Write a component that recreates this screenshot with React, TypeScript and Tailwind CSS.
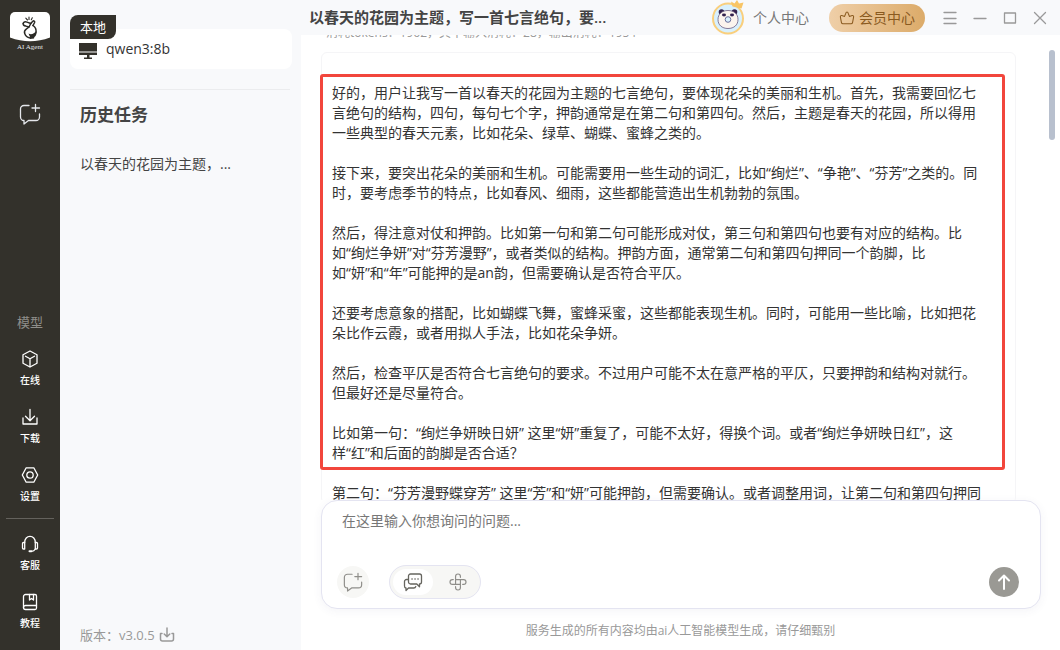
import { ReactNode } from "react";
import clsx from "clsx";

type IconProps = { className?: string };

const thoughts = [
  [
    "好的，用户让我写一首以春天的花园为主题的七言绝句，要体现花朵的美丽和生机。首先，我需要回忆七",
    "言绝句的结构，四句，每句七个字，押韵通常是在第二句和第四句。然后，主题是春天的花园，所以得用",
    "一些典型的春天元素，比如花朵、绿草、蝴蝶、蜜蜂之类的。",
  ],
  [
    "接下来，要突出花朵的美丽和生机。可能需要用一些生动的词汇，比如“绚烂”、“争艳”、“芬芳”之类的。同",
    "时，要考虑季节的特点，比如春风、细雨，这些都能营造出生机勃勃的氛围。",
  ],
  [
    "然后，得注意对仗和押韵。比如第一句和第二句可能形成对仗，第三句和第四句也要有对应的结构。比",
    "如“绚烂争妍”对“芬芳漫野”，或者类似的结构。押韵方面，通常第二句和第四句押同一个韵脚，比",
    "如“妍”和“年”可能押的是an韵，但需要确认是否符合平仄。",
  ],
  [
    "还要考虑意象的搭配，比如蝴蝶飞舞，蜜蜂采蜜，这些都能表现生机。同时，可能用一些比喻，比如把花",
    "朵比作云霞，或者用拟人手法，比如花朵争妍。",
  ],
  [
    "然后，检查平仄是否符合七言绝句的要求。不过用户可能不太在意严格的平仄，只要押韵和结构对就行。",
    "但最好还是尽量符合。",
  ],
  [
    "比如第一句：“绚烂争妍映日妍” 这里“妍”重复了，可能不太好，得换个词。或者“绚烂争妍映日红”，这",
    "样“红”和后面的韵脚是否合适？",
  ],
];

const nextThought = [
  "第二句：“芬芳漫野蝶穿芳” 这里“芳”和“妍”可能押韵，但需要确认。或者调整用词，让第二句和第四句押同",
];

const Svg = ({
  className,
  viewBox = "0 0 20 20",
  children,
}: IconProps & { viewBox?: string; children: ReactNode }) => (
  <svg
    className={className}
    viewBox={viewBox}
    fill="none"
    stroke="currentColor"
    strokeWidth="1.3"
    strokeLinecap="round"
    strokeLinejoin="round"
    aria-hidden="true"
  >
    {children}
  </svg>
);

const LogoIcon = () => (
  <svg className="h-[30px] w-10" viewBox="0 0 40 30" aria-hidden="true">
    <path d="M5 0h30a5 5 0 0 1 5 5v20.500Q20 33 0 25.500V5a5 5 0 0 1 5-5z" fill="#fff" />
    <g fill="none" stroke="#2b2a26" strokeWidth="1.5" strokeLinecap="round" strokeLinejoin="round">
      <path d="M15.800 6.200l1.700 1.800M19 5v2.500M22.300 5.800l-1 1.900" strokeWidth="1.1" />
      <path d="M13.200 11.500c.300-1.700 2-2 3.800-1.400l3.800 1.400 2-2.200c1-.900 2.300-.200 1.800 1.200l-1.600 3" />
      <path d="M13.200 11.500c-.200 1.700 1 2.300 2.600 2.600l3.200.900-2.500 1.800c-1.800 1.200-2.500 2.700-1.800 4.700.800 2.500 2.800 4 5.300 4.500" />
      <path d="M23 13.500c2.200 1.500 3.500 4 3 7-.200 1.500-.700 2.500-1.500 3.500M20.800 11.500L19 15" />
    </g>
    <path d="M18.500 21.500c2.500 1.500 5.500.500 8-2.500-.100 2.500-.700 4-2 5.500l-.500 2-4 .500v-2z" fill="#2b2a26" />
  </svg>
);

const NewChatIcon = ({ className }: IconProps) => (
  <Svg className={className} viewBox="0 0 22 22">
    <path d="M10 2.500H5A3.500 3.500 0 0 0 1.500 6v8A3.500 3.500 0 0 0 5 17.500v3.500l4.500-3.500H17a3.500 3.500 0 0 0 3.500-3.500v-3" />
    <path d="M16.500 1.500v7M13 5h7.500" />
  </Svg>
);

const CubeIcon = ({ className }: IconProps) => (
  <Svg className={className}>
    <path d="M10 2l7 3.700v8.600L10 18l-7-3.700V5.700z" />
    <path d="M5.500 7.200L10 9.800l4.500-2.600M10 9.800V17.500" />
  </Svg>
);

const DownloadIcon = ({ className }: IconProps) => (
  <Svg className={className}>
    <path d="M3 11v6h14v-6M10 2.500v11M5.500 9.200l4.500 4.500 4.500-4.500" />
  </Svg>
);

const SettingsIcon = ({ className }: IconProps) => (
  <Svg className={className}>
    <path d="M6.200 2.800h7.600L17.700 10l-3.900 7.200H6.200L2.300 10z" />
    <circle cx="10" cy="10" r="3.200" />
  </Svg>
);

const HeadsetIcon = ({ className }: IconProps) => (
  <Svg className={className}>
    <path d="M4.700 8.500C4.700 4.700 7 2.300 10 2.300s5.300 2.400 5.300 6.200" />
    <path d="M4.700 8.500v6.500H3.500c-.600 0-1-.500-1-1V9.500c0-.600.500-1 1-1zM15.300 8.500v6.500h1.200c.600 0 1-.500 1-1V9.500c0-.600-.500-1-1-1z" />
    <path d="M15.300 15c-.800 1.500-2 2.200-3.800 2.300" />
    <path d="M9.500 17.300h1.800" strokeWidth="2" />
  </Svg>
);

const BookIcon = ({ className }: IconProps) => (
  <Svg className={className}>
    <path d="M5.500 2.500h9.500c1 0 1.500.500 1.500 1.500v12c0 1-.500 1.500-1.500 1.500H5.500a2 2 0 0 1-2-2v-11a2 2 0 0 1 2-2z" />
    <path d="M3.500 15.500a2 2 0 0 1 2-2h11M9.500 2.500V8l2-1.500 2 1.500V2.500" />
  </Svg>
);

const MonitorIcon = ({ className }: IconProps) => (
  <svg className={className} viewBox="0 0 18 16" fill="currentColor" aria-hidden="true">
    <path d="M0 0h18v8.500H0zM0 9.500h18V12h-7.500v2.500H13V16H5v-1.500h3V12H0z" />
  </svg>
);

const ChatsIcon = ({ className }: IconProps) => (
  <Svg className={className}>
    <path d="M7.500 2h9c1.100 0 2 .900 2 2v6c0 1.100-.800 2-2 2v2.800L13.800 12H7.500c-1.100 0-2-.900-2-2V4c0-1.100.900-2 2-2z" />
    <path d="M5.300 7.500H3.500c-1.100 0-2 .900-2 2V14c0 1.100.700 2 1.500 2v2.500L5.500 16h5.300c1 0 1.700-.500 2-1.500" />
    <path d="M9 7h.100M12 7h.100M15 7h.100" strokeWidth="1.600" />
  </Svg>
);

// one looped strand, turned four times around the centre
const KnotIcon = ({ className }: IconProps) => (
  <Svg className={className}>
    {[0, 90, 180, 270].map((angle) => (
      <path
        key={angle}
        d="M7.300 12V3.800a2.700 2.700 0 0 1 5.400 0v1"
        transform={`rotate(${angle} 10 10)`}
      />
    ))}
  </Svg>
);

const CrownIcon = ({ className }: IconProps) => (
  <Svg className={className}>
    <path d="M10 2.500c1 0 1.300.800 1.500 1.500l1.500 4L16.500 7c1.200-.300 2 .500 1.800 1.500l-1.300 7c-.200 1.200-.800 1.800-2 1.800H5c-1.200 0-1.800-.600-2-1.800l-1.300-7C1.500 7.500 2.300 6.700 3.500 7L7 8l1.500-4c.200-.700.500-1.500 1.500-1.500z" />
  </Svg>
);

const TrayIcon = ({ className }: IconProps) => (
  <Svg className={className} viewBox="0 0 16 16">
    <path d="M3 6.500H1.500v5.500a2 2 0 0 0 2 2h9a2 2 0 0 0 2-2V6.500H13M8 1v8.500M5.200 7L8 9.800 10.800 7" strokeWidth="1.5" />
  </Svg>
);

const Avatar = () => (
  <svg className="size-9" viewBox="0 0 36 36" aria-hidden="true">
    <circle cx="18" cy="18.500" r="15" fill="#d8f0fd" stroke="#f9cf7d" strokeWidth="2" />
    <circle cx="11.500" cy="12" r="2.800" fill="#33224f" />
    <circle cx="24.500" cy="12" r="2.800" fill="#33224f" />
    <path d="M18 10.500c6 0 10 3.500 10 9s-4 9-10 9-10-3.500-10-9 4-9 10-9z" fill="#fbf4ee" stroke="#6a5a80" strokeWidth=".8" />
    <ellipse cx="14" cy="15" rx="2" ry="1.400" fill="#33224f" />
    <ellipse cx="22" cy="15" rx="2" ry="1.400" fill="#33224f" />
    <circle cx="18" cy="19.500" r="2.800" fill="#d8f0fd" stroke="#6a6f9c" strokeWidth="1" />
    <path d="M21 1.500l3.500 2L27 0l2 3.500 4.500-1-2 6-9-2z" fill="#f8c566" />
  </svg>
);

const NavItem = ({ icon, label }: { icon: ReactNode; label: string }) => (
  <button className="flex flex-col items-center gap-1">
    {icon}
    <span className="text-[10px] leading-[14px] font-medium">{label}</span>
  </button>
);

const Sidebar = () => (
  <aside className="flex w-[60px] shrink-0 flex-col items-center bg-[#33312b] pt-3 pb-5 text-white">
    <LogoIcon />
    <span className="font-['Liberation_Serif',serif] text-[7px] leading-[10px] text-gray-200">
      AI Agent
    </span>
    <button className="mt-[51px] text-gray-200" aria-label="新建对话">
      <NewChatIcon className="size-[22px]" />
    </button>
    <nav className="mt-auto flex flex-col items-center gap-5">
      <span className="text-[13px] leading-[14px] text-[#8f8e8a]">模型</span>
      <NavItem icon={<CubeIcon className="size-5" />} label="在线" />
      <NavItem icon={<DownloadIcon className="size-5" />} label="下载" />
      <NavItem icon={<SettingsIcon className="size-5" />} label="设置" />
    </nav>
    <hr className="my-[15px] w-12 border-[#64625d]" />
    <nav className="flex flex-col items-center gap-5">
      <NavItem icon={<HeadsetIcon className="size-5" />} label="客服" />
      <NavItem icon={<BookIcon className="size-5" />} label="教程" />
    </nav>
  </aside>
);

const HistoryPanel = () => (
  <section className="flex w-[241px] shrink-0 flex-col bg-[#f8f9fb] pt-[29px] pr-[9px] pb-[5px] pl-[10px]">
    <div className="relative rounded-lg bg-white">
      <button className="flex h-10 w-full items-center gap-[9px] pl-[9px] text-sm text-[#333]">
        <MonitorIcon className="mt-1 h-4 w-[18px] text-[#33312b]" />
        qwen3:8b
      </button>
      <span className="absolute -top-[14px] left-0 rounded-tl-lg rounded-br-lg bg-[#33312b] px-[10px] text-[13px] leading-6 text-white">
        本地
      </span>
    </div>
    <hr className="mt-5 mr-0.5 border-[#ebecee]" />
    <h2 className="mt-[11px] pl-[10px] text-[17px] leading-7 font-bold text-[#444]">历史任务</h2>
    <a href="#" className="mt-[25px] pl-[10px] text-sm text-[#444]">
      以春天的花园为主题，...
    </a>
    <div className="mt-auto flex items-center gap-1 pl-[10px] text-[13px] leading-5 text-[#999]">
      <span>版本：v3.0.5</span>
      <button aria-label="下载更新">
        <TrayIcon className="size-4" />
      </button>
    </div>
  </section>
);

const Header = () => (
  <header className="flex h-[35px] shrink-0 items-center bg-[#f8f9fb] pr-[10px] pl-2">
    <h1 className="flex-1 truncate text-[15px] font-semibold text-[#444]">
      以春天的花园为主题，写一首七言绝句，要...
    </h1>
    <a href="#" className="flex items-center gap-[7px] text-sm text-[#777]">
      <Avatar />
      个人中心
    </a>
    <button className="ml-5 flex h-7 items-center gap-1 rounded-full bg-linear-to-r from-[#efcfa8] to-[#dcab69] px-[10px] text-sm text-[#8a5a1f]">
      <CrownIcon className="size-4" />
      会员中心
    </button>
    <div className="ml-[15px] flex gap-[10px] text-[#999]">
      <button aria-label="菜单">
        <Svg className="size-5">
          <path d="M4 4.500h12M4 10.500h12M4 15.500h12" />
        </Svg>
      </button>
      <button aria-label="最小化">
        <Svg className="size-5">
          <path d="M4 10.500h12" />
        </Svg>
      </button>
      <button aria-label="最大化">
        <Svg className="size-5">
          <path d="M4.500 5h11v10h-11z" />
        </Svg>
      </button>
      <button aria-label="关闭">
        <Svg className="size-5">
          <path d="M4.500 4.500l11 11M15.500 4.500l-11 11" />
        </Svg>
      </button>
    </div>
  </header>
);

const Paragraph = ({ lines }: { lines: string[] }) => (
  <p className="text-sm leading-5 whitespace-pre text-[#333]">{lines.join("\n")}</p>
);

const Composer = () => (
  <form className="mr-[19px] ml-5 shrink-0 rounded-2xl border border-[#e4e4f1] bg-white pt-[10px] pr-[21px] pb-[9px] pl-[15px] shadow-[0_2px_10px_rgba(60,60,120,0.06)]">
    <textarea
      aria-label="问题"
      rows={2}
      placeholder="在这里输入你想询问的问题..."
      className="block h-[54px] w-full resize-none pl-[5px] text-sm leading-5 outline-none placeholder:text-[#777]"
    />
    <div className="flex items-center">
      <button
        type="button"
        aria-label="新建对话"
        className="flex size-8 items-center justify-center rounded-full bg-[#f7f7f5] text-[#8f8e8a]"
      >
        <NewChatIcon className="size-5" />
      </button>
      <div className="ml-5 flex h-[34px] items-center rounded-full border border-[#e4e4f1] bg-[#f7f7f5] px-[3px]">
        {[ChatsIcon, KnotIcon].map((Icon, i) => (
          <button
            key={i}
            type="button"
            aria-label={i === 0 ? "对话" : "智能体"}
            className={clsx(
              "flex h-[26px] items-center justify-center rounded-full",
              i === 0 ? "w-10 bg-white text-[#66655f]" : "w-11 pl-1.5 text-[#8f8e8a]",
            )}
          >
            <Icon className={i === 0 ? "size-5" : "size-[18px]"} />
          </button>
        ))}
      </div>
      <button
        aria-label="发送"
        className="ml-auto flex size-[30px] items-center justify-center rounded-full bg-[#9a9994] text-white"
      >
        <Svg className="size-5">
          <path d="M10 17V3.500M5 8.500l5-5 5 5" strokeWidth="2" />
        </Svg>
      </button>
    </div>
  </form>
);

export default function App() {
  return (
    <div className="flex h-screen overflow-hidden bg-white font-['Open_Sans','Noto_Sans_CJK_SC',sans-serif]">
      <Sidebar />
      <HistoryPanel />
      <main className="flex min-w-0 flex-1 flex-col">
        <Header />
        <div className="relative flex min-h-0 flex-1 flex-col overflow-hidden pr-[44px] pl-5">
          <p className="-mt-3 pl-[5px] text-xs leading-5 text-[#999]">
            消耗tokens：1962，其中输入消耗：28，输出消耗：1954
          </p>
          <article className="mt-[9px] flex-1 rounded-md border border-[#f5f5f7] pt-[21px]">
            <div className="mr-[10px] -ml-0.5 flex flex-col gap-5 rounded-[3px] border-3 border-[#f2463c] px-[9px] pt-1.5 pb-1">
              {thoughts.map((lines) => (
                <Paragraph key={lines[0]} lines={lines} />
              ))}
            </div>
            <div className="mt-[13px] pl-[10px]">
              <Paragraph lines={nextThought} />
            </div>
          </article>
          <span className="absolute top-[15px] right-[5px] h-[90px] w-1.5 rounded-full bg-[#b8c0ce]" />
        </div>
        <Composer />
        <footer className="pt-[13px] pb-[10px] text-center text-xs leading-[18px] text-[#999]">
          服务生成的所有内容均由ai人工智能模型生成，请仔细甄别
        </footer>
      </main>
    </div>
  );
}
